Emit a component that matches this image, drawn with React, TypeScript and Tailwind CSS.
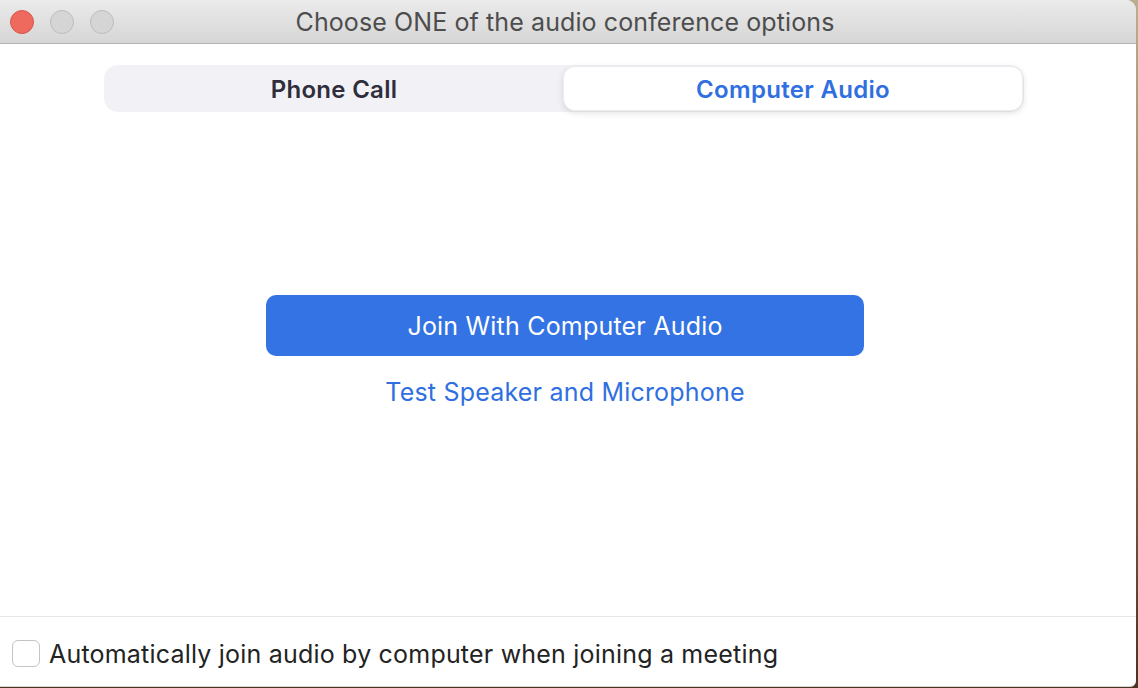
import { useState } from "react";

export default function App() {
  const [tab, setTab] = useState<"phone" | "computer">("computer");
  const [auto, setAuto] = useState(false);

  return (
    <div
      className="w-[1138px] h-[688px] flex bg-gradient-to-b from-[#b9ae8f] via-[#8c7a58] to-[#4a3320] overflow-hidden"
      style={{ fontFamily: "Inter, 'Noto Sans', sans-serif" }}
    >
      <div className="w-[1136px] h-[687px] flex flex-col bg-white rounded-tr-[10px] rounded-br-[6px] overflow-hidden border-b border-[#d4d4d4]">
        {/* title bar */}
        <div className="relative h-[44px] shrink-0 flex items-center justify-center bg-gradient-to-b from-[#ebebeb] to-[#d6d6d6] border-b border-[#b3b3b3]">
          <div className="absolute left-[10px] top-[10px] flex gap-[16px]">
            <span className="w-[24px] h-[24px] rounded-full bg-[#ee6a5f] border border-[#d6564b]" />
            <span className="w-[24px] h-[24px] rounded-full bg-[#d5d5d5] border border-[#bdbdbd]" />
            <span className="w-[24px] h-[24px] rounded-full bg-[#d5d5d5] border border-[#bdbdbd]" />
          </div>
          <span className="text-[25px] text-[#4d4d4d] tracking-[0.1px] ml-[-6px] pt-[2px]">
            Choose ONE of the audio conference options
          </span>
        </div>

        {/* segmented control */}
        <div className="pt-[21px] flex justify-center">
          <div className="w-[920px] h-[47px] ml-[-8px] bg-[#f2f2f6] rounded-[14px] flex p-[1px]">
            <button
              onClick={() => setTab("phone")}
              className={
                tab === "phone"
                  ? "flex-1 pt-[3px] rounded-[12px] bg-white shadow-[0_2px_6px_rgba(0,0,0,0.12)] border border-[#ececf0] text-[24px] tracking-[0.3px] font-semibold text-[#2f6fe0]"
                  : "flex-1 pt-[3px] rounded-[12px] text-[24px] tracking-[0.3px] font-semibold text-[#2e2e3c]"
              }
            >
              Phone Call
            </button>
            <button
              onClick={() => setTab("computer")}
              className={
                tab === "computer"
                  ? "flex-1 pt-[3px] rounded-[12px] bg-white shadow-[0_2px_6px_rgba(0,0,0,0.12)] border border-[#ececf0] text-[24px] tracking-[0.3px] font-semibold text-[#2f6fe0]"
                  : "flex-1 pt-[3px] rounded-[12px] text-[24px] tracking-[0.3px] font-semibold text-[#2e2e3c]"
              }
            >
              Computer Audio
            </button>
          </div>
        </div>

        {/* main actions */}
        <div className="flex-1 flex flex-col items-center pt-[183px] pr-[6px]">
          <button className="w-[598px] h-[61px] pt-[3px] rounded-[10px] bg-[#3473e3] text-white text-[25px] tracking-[0.2px]">
            Join With Computer Audio
          </button>
          <button className="mt-[18px] text-[25px] tracking-[0.2px] text-[#2f6fe0]">
            Test Speaker and Microphone
          </button>
        </div>

        {/* footer */}
        <div className="h-[70px] shrink-0 border-t border-[#e6e6ea] flex items-center px-[12px] gap-[9px] pt-[7px]">
          <button
            onClick={() => setAuto(!auto)}
            className={
              auto
                ? "w-[28px] h-[27px] -mt-[4px] rounded-[6px] bg-[#3473e3] border border-[#3473e3]"
                : "w-[28px] h-[27px] -mt-[4px] rounded-[6px] bg-white border border-[#c4c4c4]"
            }
          />
          <span className="text-[25px] tracking-[0.2px] text-[#232323]">
            Automatically join audio by computer when joining a meeting
          </span>
        </div>
      </div>
    </div>
  );
}
